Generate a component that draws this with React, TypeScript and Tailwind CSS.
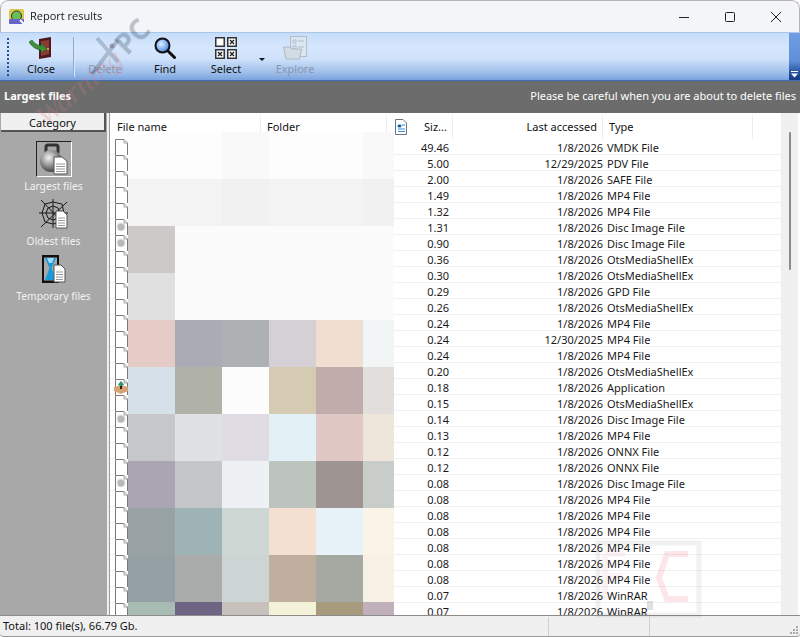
import React from "react";

const FONT = "font-['Noto_Sans','DejaVu_Sans',sans-serif]";

const rows: [string, string, string][] = [
  ["49.46", "1/8/2026", "VMDK File"],
  ["5.00", "12/29/2025", "PDV File"],
  ["2.00", "1/8/2026", "SAFE File"],
  ["1.49", "1/8/2026", "MP4 File"],
  ["1.32", "1/8/2026", "MP4 File"],
  ["1.31", "1/8/2026", "Disc Image File"],
  ["0.90", "1/8/2026", "Disc Image File"],
  ["0.36", "1/8/2026", "OtsMediaShellEx"],
  ["0.30", "1/8/2026", "OtsMediaShellEx"],
  ["0.29", "1/8/2026", "GPD File"],
  ["0.26", "1/8/2026", "OtsMediaShellEx"],
  ["0.24", "1/8/2026", "MP4 File"],
  ["0.24", "12/30/2025", "MP4 File"],
  ["0.24", "1/8/2026", "MP4 File"],
  ["0.20", "1/8/2026", "OtsMediaShellEx"],
  ["0.18", "1/8/2026", "Application"],
  ["0.15", "1/8/2026", "OtsMediaShellEx"],
  ["0.14", "1/8/2026", "Disc Image File"],
  ["0.13", "1/8/2026", "MP4 File"],
  ["0.12", "1/8/2026", "ONNX File"],
  ["0.12", "1/8/2026", "ONNX File"],
  ["0.08", "1/8/2026", "Disc Image File"],
  ["0.08", "1/8/2026", "MP4 File"],
  ["0.08", "1/8/2026", "MP4 File"],
  ["0.08", "1/8/2026", "MP4 File"],
  ["0.08", "1/8/2026", "MP4 File"],
  ["0.08", "1/8/2026", "MP4 File"],
  ["0.08", "1/8/2026", "MP4 File"],
  ["0.07", "1/8/2026", "WinRAR"],
  ["0.07", "1/8/2026", "WinRAR"],
];

const mosaic: string[][] = [
  ["#fdfdfd", "#fdfdfd", "#f9f9f9", "#fdfdfd", "#fdfdfd", "#f9f9f9"],
  ["#f3f3f3", "#f3f3f3", "#f1f1f1", "#f3f3f3", "#f3f3f3", "#f1f1f1"],
  ["#cbcac8", "#fbfbfb", "#fbfbfb", "#fcfbfb", "#fcfbfb", "#fbfbfb"],
  ["#e0e0e0", "#fbfbfb", "#fbfbfb", "#fcfbfb", "#fcfbfb", "#fbfbfb"],
  ["#e5cbc6", "#a9acb5", "#aeb1b4", "#d5d0d5", "#f0dfd0", "#f1f5f6"],
  ["#d6e0e9", "#b0b2a8", "#fcfcfc", "#d5cab2", "#c0acab", "#e2dedb"],
  ["#c6c7cb", "#e0e1e3", "#dfdde3", "#e3f0f6", "#e0c9c5", "#eee6db"],
  ["#a9a5b2", "#c3c7c9", "#edf1f3", "#bdc4bd", "#9e9592", "#c9cdca"],
  ["#98a1a3", "#9fb4b7", "#cdd8d5", "#f3e0d0", "#e8f3f9", "#faf4e8"],
  ["#94a0a4", "#a9acaa", "#ccd5d3", "#c0ae9f", "#a5a9a2", "#f7f1e6"],
  ["#a8bcb3", "#6e6483", "#c8c0bb", "#f4f1d9", "#a89a7c", "#bfb0b9"],
];

function PageIcon({ index }: { index: number }) {
  const disc = index === 5 || index === 6 || index === 17 || index === 21;
  const app = index === 15;
  return (
    <svg width="14" height="16" viewBox="0 0 14 16" className="shrink-0 -ml-[1px] overflow-visible">
      <path d="M1.5 16V.5H10L13.5 4V16" fill="#fff" stroke="#7a7a7a" />
      <path d="M10 .5V4H13.5" fill="#e8e8e8" stroke="#a5a5a5" />
      {disc && <circle cx="7" cy="8" r="3.8" fill="#b9b9b9" stroke="#d4d4d4" />}
      {app && (
        <g>
          <path d="M0 8 7 6l7 2v4l-7 3-7-3Z" fill="#d9a273" />
          <path d="M4 5.5 7 2l3 3.5L7 8Z" fill="#2c9a66" />
          <path d="M6 7h2v3H6Z" fill="#222" />
        </g>
      )}
    </svg>
  );
}

function CloseIcon() {
  return (
    <svg width="24" height="22" viewBox="0 0 24 22">
      <path d="M10 2 22 0v20l-12 2Z" fill="#4f1a1e" />
      <path d="M12 4 20 3v14l-8 2Z" fill="#8d3a34" />
      <path d="M0 5 3 3q3 5 9 6V6l6 6-6 4v-3Q4 12 0 5Z" fill="#3f8f3a" stroke="#1e5a20" strokeWidth=".6" />
      <circle cx="19" cy="12" r="1" fill="#e4c14a" />
    </svg>
  );
}
function FindIcon() {
  return (
    <svg width="22" height="22" viewBox="0 0 22 22">
      <defs>
        <radialGradient id="lens" cx=".4" cy=".4" r=".7">
          <stop offset="0" stopColor="#dff0ff" />
          <stop offset="1" stopColor="#2f78e0" />
        </radialGradient>
      </defs>
      <circle cx="8.5" cy="8.5" r="7" fill="url(#lens)" stroke="#111" strokeWidth="2" />
      <path d="M14 14 20.5 20.5" stroke="#111" strokeWidth="3" strokeLinecap="round" />
    </svg>
  );
}
function SelectIcon() {
  const cell = (x: number, y: number, mark: boolean) => (
    <g key={`${x}-${y}`}>
      <rect x={x + 0.75} y={y + 0.75} width="8.5" height="8.5" fill="#fff" stroke="#333" strokeWidth="1.5" />
      {mark && <path d={`M${x + 3} ${y + 3}l4 4m0-4l-4 4`} stroke="#222" strokeWidth="1.4" />}
    </g>
  );
  return (
    <svg width="22" height="22" viewBox="0 0 22 22">
      {cell(0, 0, false)}
      {cell(12, 0, true)}
      {cell(0, 12, true)}
      {cell(12, 12, true)}
    </svg>
  );
}
function ExploreIcon() {
  return (
    <svg width="24" height="24" viewBox="0 0 24 24">
      <rect x="7.5" y=".5" width="16" height="20" fill="#dbe6f3" stroke="#b4bcc8" />
      <path d="M10 4h3v3h-3ZM10 10h3v3h-3ZM15 5h6M15 11h6" fill="none" stroke="#b4bcc8" />
      <path d="M.5 11h6l2 2h10l-2 10H3Z" fill="#d3dbe4" stroke="#b0b8c2" />
    </svg>
  );
}
function ToolBtn({ label, icon, off, w }: { label: string; icon?: React.ReactNode; off?: boolean; w: string }) {
  return (
    <div className={`flex flex-col items-center justify-between h-[42px] -mt-[2px] ${w}`}>
      <div className="h-[26px] flex items-center justify-center">{icon}</div>
      <span className={`text-[11px] leading-[16px] ${off ? "text-[#8a97ab]" : "text-[#111]"}`}>{label}</span>
    </div>
  );
}

function Kettlebell() {
  return (
    <svg width="30" height="32" viewBox="0 0 30 32">
      <defs>
        <radialGradient id="kb" cx=".4" cy=".35" r=".7">
          <stop offset="0" stopColor="#f2f2f2" />
          <stop offset="1" stopColor="#3a3a3a" />
        </radialGradient>
      </defs>
      <path d="M7 10V4q0-2 2-2h8q2 0 2 2v6" fill="none" stroke="#333" strokeWidth="3" />
      <circle cx="12" cy="18" r="11" fill="url(#kb)" />
      <path d="M15 14h8l5 4v13H15Z" fill="#fff" stroke="#555" />
      <path d="M17 21h9M17 23.5h9M17 26h9M17 28.5h9" stroke="#999" />
    </svg>
  );
}
function Web() {
  return (
    <svg width="30" height="30" viewBox="0 0 30 30">
      <g fill="none" stroke="#1a1a1a" strokeWidth="1">
        <path d="M2 1 26 26M28 3 2 28M14 0V29M0 14H29" />
        <path d="M6 5 14 3 23 5 25 14 22 23 14 25 6 23 3 14Z" />
        <path d="M9 9 14 7 19 9 21 14 19 19 14 21 9 19 7 14Z" />
      </g>
      <path d="M17 12h7l4 4v13H17Z" fill="#fff" stroke="#555" />
      <path d="M19 19h7M19 21.5h7M19 24h7M19 26.5h7" stroke="#999" />
    </svg>
  );
}
function Hourglass() {
  return (
    <svg width="24" height="28" viewBox="0 0 24 28">
      <rect x="0" y="0" width="17" height="2.5" fill="#111" />
      <rect x="0" y="25.5" width="17" height="2.5" fill="#111" />
      <rect x="0" y="0" width="2" height="28" fill="#111" />
      <rect x="15" y="0" width="2" height="28" fill="#111" />
      <path d="M3 3h11L9.5 13 14 25H3l4.5-12Z" fill="#1a9ade" />
      <path d="M5 3h7l-2 5H7Z" fill="#9fdcff" />
      <path d="M12 10h7l4 4v13H12Z" fill="#fff" stroke="#555" />
      <path d="M14 17h7M14 19.5h7M14 22h7M14 24.5h7" stroke="#999" />
    </svg>
  );
}
function Cat({ label, icon, active }: { label: string; icon: React.ReactNode; active?: boolean }) {
  return (
    <div className="flex flex-col items-center">
      <div className={`w-[36px] h-[36px] flex items-center justify-center ${active ? "border border-t-[#222] border-l-[#222] border-r-white border-b-white" : ""}`}>
        {icon}
      </div>
      <span className="text-[10.3px] leading-[16px] text-[#f2f2f2] mt-[1px]">{label}</span>
    </div>
  );
}

export default function App() {
  return (
    <div className={`w-[800px] h-[637px] flex flex-col overflow-hidden bg-[#f0f0f0] rounded-t-[8px] relative ${FONT}`}>
      {/* title bar */}
      <div className="h-[32px] shrink-0 flex items-center bg-[#f3f5f8] border-t border-x border-[#b5b5b5] rounded-t-[8px]">
        <svg width="16" height="16" viewBox="0 0 16 16" className="ml-[8px]">
          <rect x="0" y="0" width="15" height="14" rx="2" fill="#d9c94a" />
          <circle cx="7.5" cy="7" r="5" fill="#6bbf57" stroke="#333" strokeWidth="1" />
          <rect x="0" y="10" width="15" height="5" rx="1" fill="#6a63c6" />
          <path d="M11 11l4 4" stroke="#fff" strokeWidth="2" />
        </svg>
        <span className="ml-[5px] text-[11px] text-[#1a1a1a] font-['Open_Sans',sans-serif]">Report results</span>
        <div className="ml-auto flex items-center text-[#222]">
          <div className="w-[46px] flex justify-center">
            <svg width="10" height="10" viewBox="0 0 10 10"><path d="M0 5.5H10" stroke="#222" /></svg>
          </div>
          <div className="w-[46px] flex justify-center">
            <svg width="10" height="10" viewBox="0 0 10 10"><rect x=".5" y=".5" width="9" height="9" rx="1" fill="none" stroke="#222" /></svg>
          </div>
          <div className="w-[46px] flex justify-center">
            <svg width="10" height="10" viewBox="0 0 10 10"><path d="M0 0 10 10M10 0 0 10" stroke="#222" /></svg>
          </div>
        </div>
      </div>

      {/* toolbar */}
      <div className="h-[49px] shrink-0 flex items-center pl-[3px] bg-[linear-gradient(#c5ddfa_0,#d6e7fd_30%,#cfe2fb_55%,#9dbde9_85%,#7aa3de_100%)] border-t border-[#aac6ea] border-b border-b-[#3e6eb3] relative">
        <div className="ml-[4px] w-[2px] h-[38px] bg-[repeating-linear-gradient(#2a4f92_0_2px,transparent_2px_4px)]" />
        <ToolBtn label="Close" icon={<CloseIcon />} w="w-[60px] ml-[2px]" />
        <div className="w-[2px] h-[40px] bg-[#88a8d6] border-r border-white/70 ml-[2px]" />
        <ToolBtn label="Delete" off w="w-[60px]" />
        <ToolBtn label="Find" icon={<FindIcon />} w="w-[60px]" />
        <ToolBtn label="Select" icon={<SelectIcon />} w="w-[60px] ml-[1px]" />
        <svg width="6" height="3" viewBox="0 0 6 3" className="ml-[3px] mt-[5px]"><path d="M0 0H6L3 3Z" fill="#111" /></svg>
        <ToolBtn label="Explore" icon={<ExploreIcon />} off w="w-[60px]" />
        <div className="ml-auto w-[11px] h-full bg-[linear-gradient(#6f9de0,#5e8fd8_60%,#264f9f_85%,#163b86)] flex items-end justify-center pb-[2px]">
          <svg width="7" height="7" viewBox="0 0 7 7"><path d="M0 0H7V1H0ZM0 2.5H7L3.5 6.5Z" fill="#fff" /></svg>
        </div>
      </div>

      {/* header band */}
      <div className="h-[32px] shrink-0 flex items-center justify-between pl-[4px] pr-[4px] pb-[2px] bg-[#6c6c6c] text-white">
        <span className="text-[11px] font-bold">Largest files</span>
        <span className="text-[11px]">Please be careful when you are about to delete files</span>
      </div>

      {/* body */}
      <div className="flex-1 min-h-0 flex bg-[#a8a8a8] pl-[1px]">
        <div className="w-[105px] shrink-0 flex flex-col">
          <div className="h-[19px] pt-[3px] bg-[#f0f0f0] border-b-2 border-r-2 border-[#555] flex items-center justify-center text-[11px] text-[#111]">Category</div>
          <div className="flex flex-col gap-[2px] pt-[9px]">
            <Cat label="Largest files" icon={<Kettlebell />} active />
            <Cat label="Oldest files" icon={<Web />} />
            <Cat label="Temporary files" icon={<Hourglass />} />
          </div>
        </div>
        <div className="w-[2px] bg-[#f0f0f0] ml-[1px]" />
        <div className="w-[1px] bg-[#9a9a9a]" />
        <div className="w-[690px] relative overflow-hidden bg-white flex flex-col text-[11px] text-[#1a1a1a]">
          <div className="h-[26px] shrink-0 flex items-center pt-[2px] text-[#111]">
            <div className="w-[151px] h-full pl-[7px] flex items-center border-r border-[#ececec]">File name</div>
            <div className="w-[126px] h-full pl-[6px] flex items-center border-r border-[#ececec]">Folder</div>
            <div className="w-[66px] h-full flex items-center border-r border-[#ececec] pl-[8px]">
              <svg width="12" height="16" viewBox="0 0 12 16">
                <path d="M.5.5H8L11.5 4V15.5H.5Z" fill="#fff" stroke="#6a7480" />
                <path d="M3 6h3v2H3ZM7 6h3M3 10h7M3 12.5h7" stroke="#2f8fe0" />
              </svg>
              <span className="ml-[17px]">Siz...</span>
            </div>
            <div className="w-[150px] h-full flex items-center justify-end pr-[5px] border-r border-[#ececec]">Last accessed</div>
            <div className="w-[150px] h-full pl-[6px] flex items-center border-r border-[#ececec]">Type</div>
          </div>
          <div className="flex-1 min-h-0 overflow-hidden">
            {rows.map((r, i) => (
              <div key={i} className="h-[16px] flex items-start leading-[16px] border-b border-[#f0f0f0] w-[671px]">
                <div className="w-[22px] pl-[5px] shrink-0 h-full"><PageIcon index={i} /></div>
                <div className="w-[317px] shrink-0 text-right mt-[1px]">{r[0]}</div>
                <div className="w-[154px] shrink-0 text-right mt-[1px]">{r[1]}</div>
                <div className="pl-[4px] flex-1 mt-[1px]">{r[2]}</div>
              </div>
            ))}
          </div>
          {/* blurred preview covering the name and folder columns */}
          <div className="absolute left-[18px] top-[19px] w-[266px] h-[483px] grid grid-cols-[47px_47px_47px_47px_47px_31px] grid-rows-[repeat(10,47px)_13px]">
            {mosaic.flat().map((c, i) => (
              <div key={i} style={{ backgroundColor: c }} />
            ))}
          </div>
          {/* scrollbar */}
          <div className="absolute right-[2px] top-0 bottom-0 w-[17px] bg-[#f0f0f0] flex justify-center">
            <div className="w-[2px] h-[138px] mt-[19px] bg-[#8c8c8c] rounded-full" />
          </div>
        </div>
      </div>

      {/* status bar */}
      <div className="h-[22px] shrink-0 flex items-center pt-[1px] bg-[#f0f0f0] border-t border-[#8c8c8c] text-[11px] text-[#111] relative rounded-b-[4px] border-b border-b-[#9a9a9a]">
        <span className="pl-[3px] w-[548px]">Total: 100 file(s), 66.79 Gb.</span>
        <div className="w-[1px] h-full bg-[#d0d0d0]" />
        <div className="w-[100px]" />
        <div className="w-[1px] h-full bg-[#d0d0d0]" />
        <svg width="10" height="10" viewBox="0 0 10 10" className="absolute right-[1px] bottom-[1px]">
          <path d="M7 1h2v2H7ZM4 4h2v2H4ZM7 4h2v2H7ZM1 7h2v2H1ZM4 7h2v2H4ZM7 7h2v2H7Z" fill="#aaa" />
        </svg>
      </div>

      {/* watermarks */}
      <svg width="107" height="80" viewBox="0 0 107 80" className="absolute left-[595px] top-[540px] mix-blend-multiply pointer-events-none">
        <rect x="3" y="3" width="101" height="72" fill="none" stroke="#f1f1f1" strokeWidth="5" />
        <path d="M10 14V60M10 14H30M10 36H28" fill="none" stroke="#fdf3f4" strokeWidth="6" />
        <path d="M93 14H72L64 38 72 59H93" fill="none" stroke="#fde6e9" strokeWidth="6" />
        <rect x="52" y="61" width="6" height="9" fill="#e0e0e0" />
      </svg>
      <svg width="40" height="44" viewBox="0 0 40 44" className="absolute left-[88px] top-[34px] mix-blend-multiply pointer-events-none">
        <path d="M9 4 30 28M30 6 4 40" stroke="#aeb2b8" strokeWidth="4" opacity=".6" />
        <circle cx="24" cy="12" r="2.5" fill="#8a6a7a" opacity=".5" />
      </svg>
      <div className="absolute left-[102px] top-[16px] w-[60px] h-[40px] flex items-center justify-center -rotate-45 text-[28px] leading-none font-bold text-[#aeb2b8]/70 mix-blend-multiply pointer-events-none">PC</div>
      <div className="absolute left-[19px] top-[67px] w-[120px] h-[40px] flex items-center justify-center -rotate-[40deg] text-[30px] leading-none italic text-[#e07a7a]/25 font-['Liberation_Serif',serif] pointer-events-none">Warning</div>
    </div>
  );
}
